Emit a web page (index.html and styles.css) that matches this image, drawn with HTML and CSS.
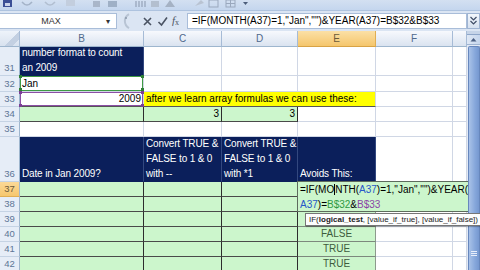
FILE: index.html
```html
<!DOCTYPE html>
<html lang="en">
<head>
    <meta charset="UTF-8">
    <meta name="viewport" content="width=device-width, initial-scale=1.0">
    <title>IF MONTH YEAR formula</title>
    <link rel="stylesheet" href="styles.css">
</head>
<body>

<div class="toolbar">
    <svg width="480" height="10" viewBox="0 0 480 10">
        <rect x="3" y="0" width="9" height="7" fill="#3b4f96"/>
        <rect x="5" y="3" width="5" height="3" fill="#c9d3ea"/>
        <path d="M22 2 q5 6 10 0" stroke="#a4b3c8" stroke-width="1.5" fill="none"/>
        <path d="M45 2 q5 6 10 0" stroke="#b2bfd1" stroke-width="1.5" fill="none"/>
        <rect x="66" y="0" width="9" height="6" fill="#c3cede"/>
        <rect x="93" y="1" width="7" height="6" fill="#a9b6c9"/>
        <rect x="108" y="1" width="9" height="6" fill="#9fb0c6"/>
        <path d="M136 1 v6 M139 1 v6 M142 1 v6 M145 1 v6" stroke="#8795ab" stroke-width="1"/>
        <rect x="151" y="1" width="8" height="6" fill="#b3bfcf"/>
        <path d="M165 7 l5 -7 l5 7 z" fill="#a5b2c4"/>
        <path d="M195 6 l6 -6 l3 3 z" fill="#b9c3d2"/>
        <rect x="209" y="0" width="9" height="7" fill="none" stroke="#9aa8bd"/>
        <rect x="226" y="0" width="9" height="7" fill="none" stroke="#9aa8bd"/>
        <path d="M226 3.5 h9 M230.5 0 v7" stroke="#9aa8bd"/>
        <path d="M243 2 h5 l-2.5 3 z" fill="#4c5d7a"/>
    </svg>
</div>

<div class="formula-bar">
    <div class="name-box">
        <span class="name">MAX</span>
        <span class="name-arrow">&#9662;</span>
    </div>
    <div class="fx-buttons">
        <svg class="fx-grip" width="9" height="16" viewBox="0 0 9 16">
            <path d="M8 1 A8 8 0 0 0 8 15" stroke="#b8c4d4" stroke-width="2" fill="none"/>
            <circle cx="5" cy="5" r="1" fill="#8b98ab"/>
        </svg>
        <svg class="fx-btn" width="11" height="11" viewBox="0 0 11 11">
            <path d="M2 2 L9 9 M9 2 L2 9" stroke="#4a5363" stroke-width="1.6"/>
        </svg>
        <svg class="fx-btn" width="11" height="11" viewBox="0 0 11 11">
            <path d="M1.5 6 L4.5 9 L10 1.5" stroke="#4a5363" stroke-width="1.6" fill="none"/>
        </svg>
        <span class="fx-label"><i>f</i><sub>x</sub></span>
    </div>
    <div class="formula">=IF(MONTH(A37)=1,"Jan","")&amp;YEAR(A37)=B$32&amp;B$33</div>
    <div class="expand">
        <svg width="9" height="12" viewBox="0 0 9 12">
            <path d="M1.5 2 L4.5 5 L7.5 2 M1.5 6 L4.5 9 L7.5 6" stroke="#3f4d66" stroke-width="1.2" fill="none"/>
        </svg>
    </div>
</div>

<div class="sheet-area">
    <div class="sheet">
        <!-- column headings -->
        <div class="cell ch corner"></div>
        <div class="cell ch">B</div>
        <div class="cell ch">C</div>
        <div class="cell ch">D</div>
        <div class="cell ch active">E</div>
        <div class="cell ch">F</div>
        <div class="cell ch"></div>

        <!-- 31 -->
        <div class="cell rh">31</div>
        <div class="cell navy tight">number format to count<br>an 2009</div>
        <div class="cell"></div>
        <div class="cell"></div>
        <div class="cell"></div>
        <div class="cell"></div>
        <div class="cell"></div>

        <!-- 32 -->
        <div class="cell rh">32</div>
        <div class="cell range-green">Jan</div>
        <div class="cell"></div>
        <div class="cell"></div>
        <div class="cell"></div>
        <div class="cell"></div>
        <div class="cell"></div>

        <!-- 33 -->
        <div class="cell rh">33</div>
        <div class="cell num range-purple">2009</div>
        <div class="cell yellow">after we learn array formulas we can use these:</div>
        <div class="cell"></div>
        <div class="cell"></div>

        <!-- 34 -->
        <div class="cell rh">34</div>
        <div class="cell green"></div>
        <div class="cell green num">3</div>
        <div class="cell green num">3</div>
        <div class="cell"></div>
        <div class="cell"></div>
        <div class="cell"></div>

        <!-- 35 -->
        <div class="cell rh">35</div>
        <div class="cell"></div>
        <div class="cell"></div>
        <div class="cell"></div>
        <div class="cell"></div>
        <div class="cell"></div>
        <div class="cell"></div>

        <!-- 36 -->
        <div class="cell rh">36</div>
        <div class="cell navy">Date in Jan 2009?</div>
        <div class="cell navy">Convert TRUE &amp;<br>FALSE to 1 &amp; 0<br>with --</div>
        <div class="cell navy">Convert TRUE &amp;<br>FALSE to 1 &amp; 0<br>with *1</div>
        <div class="cell navy">Avoids This:</div>
        <div class="cell"></div>
        <div class="cell"></div>

        <!-- 37 -->
        <div class="cell rh active">37</div>
        <div class="cell green"></div>
        <div class="cell green"></div>
        <div class="cell green"></div>
        <div class="cell green last"></div>
        <div class="cell"></div>
        <div class="cell"></div>

        <!-- 38 -->
        <div class="cell rh">38</div>
        <div class="cell green"></div>
        <div class="cell green"></div>
        <div class="cell green"></div>
        <div class="cell green last"></div>
        <div class="cell"></div>
        <div class="cell"></div>

        <!-- 39 -->
        <div class="cell rh">39</div>
        <div class="cell green"></div>
        <div class="cell green"></div>
        <div class="cell green"></div>
        <div class="cell green last"></div>
        <div class="cell"></div>
        <div class="cell"></div>

        <!-- 40 -->
        <div class="cell rh">40</div>
        <div class="cell green"></div>
        <div class="cell green"></div>
        <div class="cell green"></div>
        <div class="cell green last bool">FALSE</div>
        <div class="cell"></div>
        <div class="cell"></div>

        <!-- 41 -->
        <div class="cell rh">41</div>
        <div class="cell green"></div>
        <div class="cell green"></div>
        <div class="cell green"></div>
        <div class="cell green last bool">TRUE</div>
        <div class="cell"></div>
        <div class="cell"></div>

        <!-- 42 -->
        <div class="cell rh">42</div>
        <div class="cell green"></div>
        <div class="cell green"></div>
        <div class="cell green"></div>
        <div class="cell green last bool">TRUE</div>
        <div class="cell"></div>
        <div class="cell"></div>
    </div>

    <div class="vscroll">
        <div class="vs-split"></div>
        <div class="vs-up">
            <svg width="7" height="5" viewBox="0 0 7 5"><path d="M0.5 4.5 L3.5 1 L6.5 4.5 z" fill="#4d6185"/></svg>
        </div>
        <div class="vs-thumb"><span class="vs-grip"></span></div>
    </div>

    <!-- in-cell editing of E37 -->
    <div class="cell-editor">=IF(MO<span class="caret"></span>NTH(<span class="ref-a">A37</span>)=1,"Jan","")&amp;YEAR(<br><span class="ref-a">A37</span>)=<span class="ref-b">B$32</span>&amp;<span class="ref-c">B$33</span></div>

    <div class="tip">IF(<b>logical_test</b>, [value_if_true], [value_if_false])</div>
</div>

</body>
</html>
```

FILE: styles.css
```css
body {
    margin: 0;
    width: 480px;
    height: 270px;
    overflow: hidden;
    font-family: "Liberation Sans", Arial, sans-serif;
    font-size: 10px;
    color: #000;
    background: #fff;
}

/* quick access bar, cut off at the top */
.toolbar {
    height: 10px;
    background: linear-gradient(#d3e0f1, #c4d6ee);
    border-bottom: 1px solid #aec3df;
}
.toolbar svg {
    display: block;
}

/* formula bar */
.formula-bar {
    height: 20px;
    display: flex;
    align-items: center;
    background: #dbe5f3;
}
.name-box {
    width: 117px;
    height: 16px;
    box-sizing: border-box;
    display: flex;
    align-items: center;
    background: #fff;
    border: 1px solid #a9bdd9;
    border-left: none;
}
.name {
    flex: 1;
    text-align: center;
    color: #333;
    font-size: 9px;
    padding-right: 4px;
}
.name-arrow {
    width: 10px;
    font-size: 8px;
    color: #333;
}
.fx-buttons {
    width: 66px;
    height: 16px;
    margin-left: 4px;
    display: flex;
    align-items: center;
    gap: 4px;
}
.fx-grip {
    display: block;
    margin-right: 8px;
}
.fx-btn {
    display: block;
}
.fx-label {
    font-family: "Liberation Serif", serif;
    font-size: 11px;
    color: #4a5363;
    line-height: 1;
}
.fx-label sub {
    font-size: 8px;
    vertical-align: -1px;
}
.formula {
    flex: 1;
    height: 16px;
    box-sizing: border-box;
    background: #fff;
    border: 1px solid #a9bdd9;
    padding-left: 4px;
    line-height: 14px;
    white-space: nowrap;
    overflow: hidden;
}
.expand {
    width: 13px;
    height: 16px;
    box-sizing: border-box;
    display: flex;
    align-items: center;
    justify-content: center;
    background: linear-gradient(#f3f7fc, #d6e1f0);
    border: 1px solid #9fb4d2;
}
.expand svg {
    display: block;
}

/* worksheet */
.sheet-area {
    position: relative;
    display: flex;
}
.sheet {
    display: grid;
    grid-template-columns: 20px 124px 78px 76px 78px 77px 14px;
    grid-template-rows: 16px 29px 16px 15px 15px 15px 45px repeat(6, 15px);
}
.cell {
    box-sizing: border-box;
    display: flex;
    align-items: flex-end;
    padding: 0 2px;
    border-right: 1px solid #d0d7e5;
    border-bottom: 1px solid #d0d7e5;
    line-height: 14px;
    white-space: nowrap;
}
.ch {
    align-items: center;
    justify-content: center;
    background: linear-gradient(#f7f9fd, #dae3f0);
    border-right-color: #a6bbd6;
    border-bottom-color: #9eb6ce;
    color: #50698c;
}
.ch.active {
    background: linear-gradient(#fbe0a6, #f5c66c);
    border-right-color: #e0ae53;
    border-bottom-color: #d8a345;
    color: #6b5a3a;
}
.corner {
    background:
        linear-gradient(135deg, transparent 58%, #c3d0e2 58%, #c3d0e2 82%, transparent 82%),
        linear-gradient(#eef3fa, #d8e2ef);
}
.rh {
    justify-content: center;
    padding: 0;
    background: #e6edf7;
    border-right-color: #9eb6ce;
    border-bottom-color: #c5d3e4;
    color: #5d7596;
    font-size: 9.5px;
}
.rh.active {
    background: linear-gradient(#fbd997, #f6c76e);
    border-bottom-color: #e0ae53;
    color: #6b5a3a;
}
.num {
    justify-content: flex-end;
}
.navy {
    background: #0b1f5b;
    color: #fff;
    border-right-color: #33487f;
    border-bottom-color: #0b1f5b;
    line-height: 15px;
    letter-spacing: -0.15px;
    overflow: hidden;
}
.navy.tight {
    line-height: 14.5px;
}
.green {
    background: #ccf6cc;
    border-right-color: #2d2d2d;
    border-bottom-color: #4a4a4a;
}
.green.last {
    border-right-color: #8d9a8d;
    border-bottom-color: #7d897d;
}
.bool {
    justify-content: center;
    color: #3d5c3d;
}
.yellow {
    grid-column: span 3;
    background: #ffff00;
    border-bottom-color: #555;
}

/* ranges picked up by the formula being edited */
.range-green,
.range-purple {
    position: relative;
}
.range-green {
    box-shadow: inset 0 0 0 1px #3f9a45;
}
.range-purple {
    box-shadow: inset 0 0 0 1px #8c4fa5;
    border-bottom-color: #555;
}
.range-green::after,
.range-purple::after {
    content: "";
    position: absolute;
    left: -1px;
    top: -1px;
    width: 3px;
    height: 3px;
}
.range-green::after {
    background: #2f7f36;
    box-shadow: 122px 0 #2f7f36, 0 13px #2f7f36, 122px 13px #2f7f36;
}
.range-purple::after {
    background: #7a3f94;
    box-shadow: 122px 0 #7a3f94, 0 13px #7a3f94, 122px 13px #7a3f94;
}

/* vertical scroll bar */
.vscroll {
    width: 13px;
    height: 239px;
    display: flex;
    flex-direction: column;
    background: #e3eaf5;
}
.vs-split {
    height: 3px;
    background: #c6d4e8;
    border-bottom: 1px solid #8ea6c9;
}
.vs-up {
    height: 9px;
    display: flex;
    align-items: center;
    justify-content: center;
    background: linear-gradient(90deg, #dfe8f5, #c5d5ec);
    border-bottom: 1px solid #9fb4d2;
}
.vs-up svg {
    display: block;
}
.vs-thumb {
    flex: 1;
    margin: 1px 0 0 1px;
    position: relative;
    background: linear-gradient(90deg, #a9c2e8, #86a7db 60%, #7698d0);
    border: 1px solid #6787bd;
    border-bottom: none;
    border-radius: 2px 2px 0 0;
}
.vs-grip {
    position: absolute;
    left: 2px;
    top: 204px;
    width: 6px;
    height: 5px;
    background: repeating-linear-gradient(#e8eefa 0 1px, transparent 1px 2px);
}

/* cell editor over E37 */
.cell-editor {
    position: absolute;
    left: 297px;
    top: 150px;
    width: 171px;
    height: 31px;
    box-sizing: border-box;
    padding: 0 2px;
    background: #ccf6cc;
    border: 1px solid #5d6b5d;
    border-right: none;
    line-height: 15px;
    white-space: nowrap;
    overflow: hidden;
}
.caret {
    display: inline-block;
    width: 0;
    height: 11px;
    border-left: 1px solid #000;
    vertical-align: -2px;
}
.ref-a {
    color: #2757c9;
}
.ref-b {
    color: #2e9a43;
}
.ref-c {
    color: #8a45a6;
}

/* function argument tooltip */
.tip {
    position: absolute;
    left: 305px;
    top: 182px;
    height: 13px;
    box-sizing: border-box;
    padding: 0 3px;
    background: #fdfdfd;
    border: 1px solid #767676;
    box-shadow: 1px 1px 1px rgba(0, 0, 0, 0.25);
    font-size: 8px;
    line-height: 11px;
    color: #222;
    white-space: nowrap;
}
```
